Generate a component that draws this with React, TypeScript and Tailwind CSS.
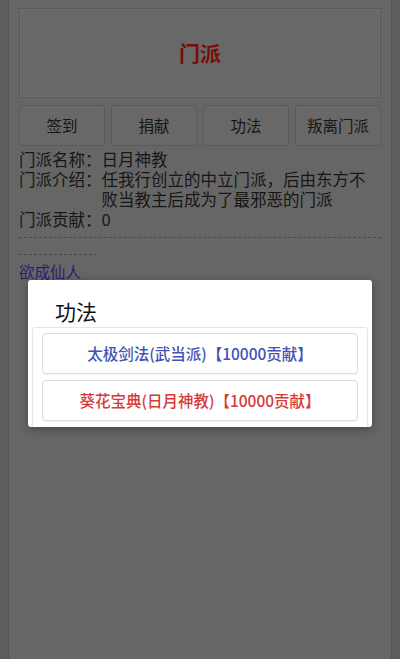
const actions = ["签到", "捐献", "功法", "叛离门派"];

const skills = [
  { name: "太极剑法(武当派)【10000贡献】", color: "text-[#4352b4]" },
  { name: "葵花宝典(日月神教)【10000贡献】", color: "text-[#d63a3a]" },
];

export default function App() {
  return (
    <div
      className="relative h-[659px] w-full overflow-hidden bg-[#5d5d5d]"
      style={{ fontFamily: '"Noto Sans CJK SC", "Noto Sans", sans-serif' }}>
      {/* page behind the dimmed overlay */}
      <div className="mx-[8px] h-full border-x border-[#585858] bg-[#666666] px-[10px] pt-[8px] text-[#161616]">
        <div className="flex h-[90px] items-center justify-center border border-[#5a5a5a] bg-[#686868] shadow-[inset_0_0_0_1px_#6e6e6e]">
          <span className="text-[21px] font-bold text-[#7a0c0c]">门派</span>
        </div>

        <div className="mt-[7px] grid grid-cols-4 gap-[6px]">
          {actions.map((a) => (
            <div
              key={a}
              className="flex h-[41px] items-center justify-center rounded-[3px] border border-[#5a5a5a] bg-[#686868] text-[15.5px]">
              {a}
            </div>
          ))}
        </div>

        <div className="mt-[3px] text-[16.5px] leading-[20px]">
          <div className="flex">
            <span className="shrink-0">门派名称：</span>
            <span>日月神教</span>
          </div>
          <div className="flex">
            <span className="shrink-0">门派介绍：</span>
            <span>任我行创立的中立门派，后由东方不败当教主后成为了最邪恶的门派</span>
          </div>
          <div className="flex">
            <span className="shrink-0">门派贡献：</span>
            <span>0</span>
          </div>
        </div>

        <div className="mt-[8px] border-t border-dashed border-[#4a4a4a]" />
        <div className="mt-[16px] w-[78px] border-t border-dashed border-[#4a4a4a]" />
        <div className="mt-[6px] text-[15.5px] leading-[20px] text-[#2a1f72]">欲成仙人</div>
      </div>

      {/* dialog */}
      <div className="absolute left-[28px] top-[280px] h-[147px] w-[344px] overflow-hidden rounded-[3px] bg-white shadow-[0_2px_10px_rgba(0,0,0,0.35)]">
        <div className="pl-[27px] pt-[17px] text-[21px] leading-[28px] text-[#111]">功法</div>
        <div className="mx-[4px] mt-[2px] h-[120px] rounded-[3px] border border-[#e6e6e6] px-[9px] pt-[5px]">
          <div className="flex flex-col gap-[6px]">
            {skills.map((s) => (
              <div
                key={s.name}
                className={`flex h-[41px] items-center justify-center rounded-[4px] border border-[#dcdcdc] text-[15.5px] font-medium shadow-[0_1px_1px_rgba(0,0,0,0.06)] ${s.color}`}>
                {s.name}
              </div>
            ))}
          </div>
        </div>
      </div>
    </div>
  );
}
